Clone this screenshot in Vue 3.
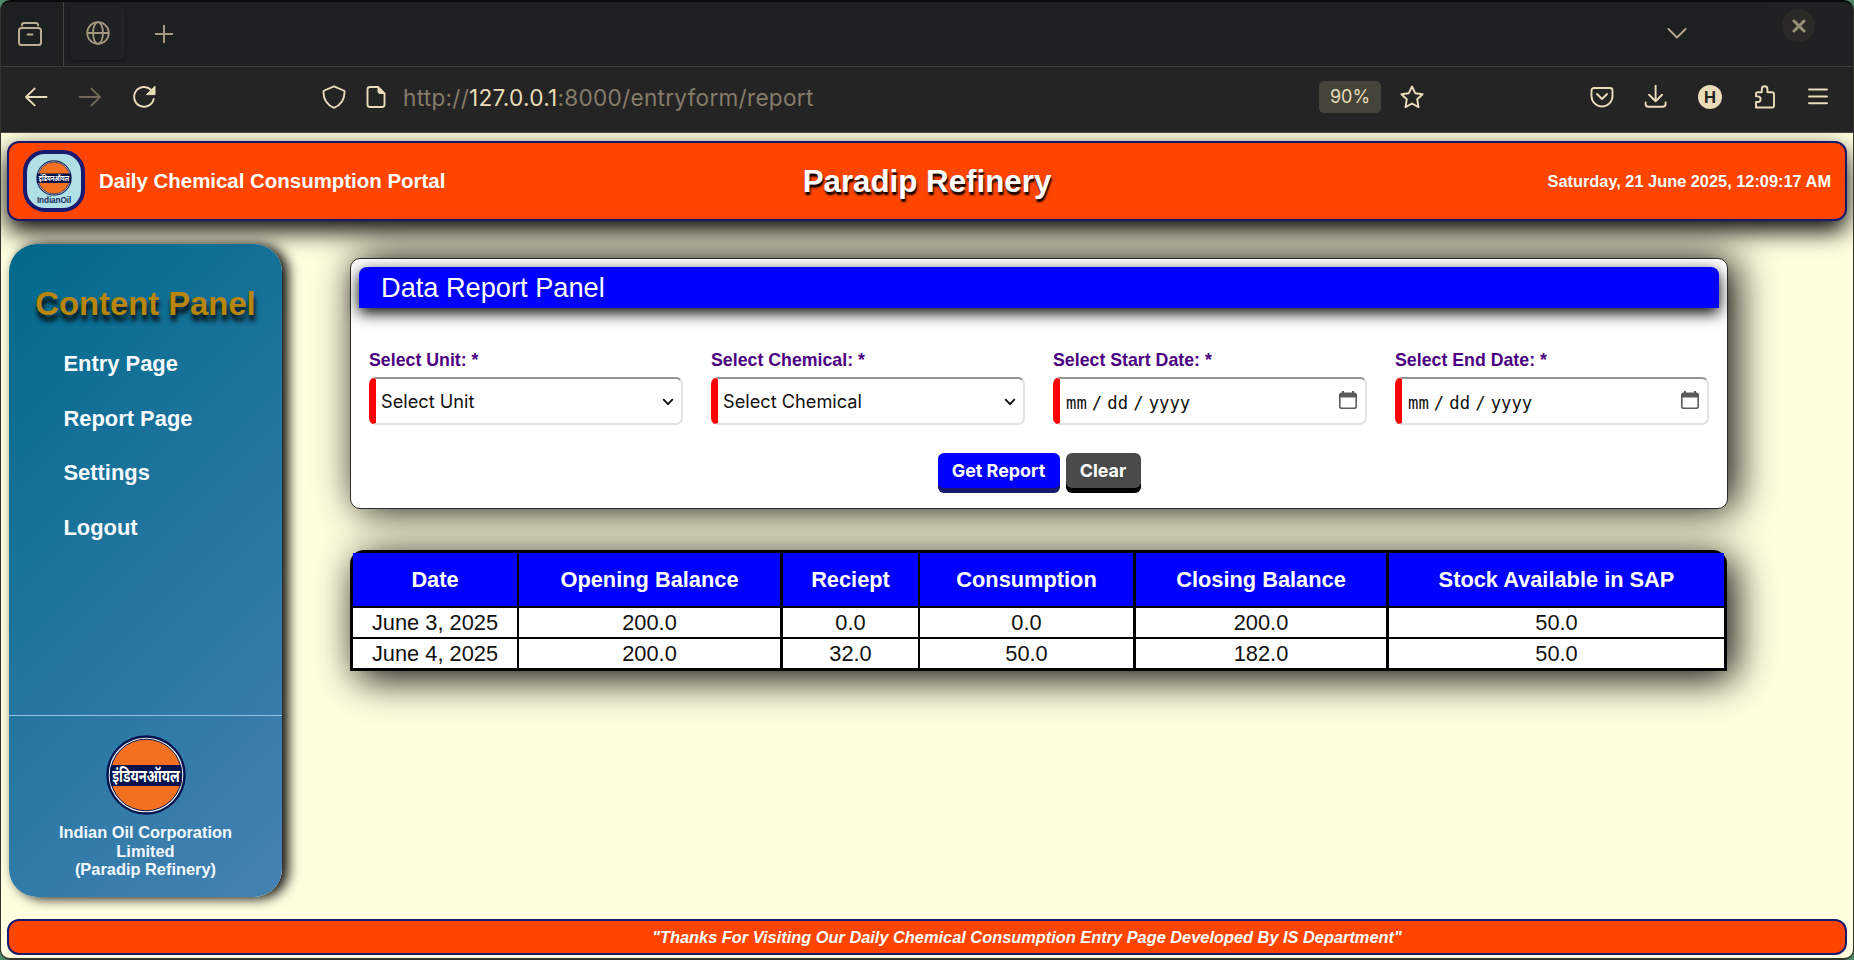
<script setup>
const menu = ['Entry Page', 'Report Page', 'Settings', 'Logout']

const fields = [
  { label: 'Select Unit: *', kind: 'select', text: 'Select Unit' },
  { label: 'Select Chemical: *', kind: 'select', text: 'Select Chemical' },
  { label: 'Select Start Date: *', kind: 'date' },
  { label: 'Select End Date: *', kind: 'date' },
]

const columns = ['Date', 'Opening Balance', 'Reciept', 'Consumption', 'Closing Balance', 'Stock Available in SAP']
const rows = [
  ['June 3, 2025', '200.0', '0.0', '0.0', '200.0', '50.0'],
  ['June 4, 2025', '200.0', '32.0', '50.0', '182.0', '50.0'],
]
</script>

<template>
  <div class="desktop">
    <div class="window">
      <div class="tabs">
        <div class="view">
          <svg width="26" height="26" viewBox="0 0 26 26" fill="none" stroke="#b9ae92" stroke-width="2" stroke-linecap="round">
            <path d="M5 4.4V4a2 2 0 0 1 2-2h12a2 2 0 0 1 2 2v.4" />
            <rect x="2" y="7" width="22" height="17" rx="2.6" />
            <path d="M10.6 13.6h4.8" />
          </svg>
        </div>
        <div class="tab">
          <svg width="24" height="24" viewBox="0 0 24 24" fill="none" stroke="#a2977f" stroke-width="1.8">
            <circle cx="12" cy="12" r="10.8" />
            <ellipse cx="12" cy="12" rx="5" ry="10.8" />
            <path d="M1.5 12h21" />
          </svg>
        </div>
        <svg class="plus" width="20" height="20" viewBox="0 0 20 20" stroke="#a2977f" stroke-width="2"><path d="M10 1v18M1 10h18" /></svg>
        <svg class="list" width="20" height="12" viewBox="0 0 20 12" fill="none" stroke="#b3a98d" stroke-width="1.8" stroke-linecap="round" stroke-linejoin="round"><path d="M1.4 1 10 9.500l8.600-8.500" /></svg>
        <div class="controls">
          <div class="close">
            <svg width="14" height="14" viewBox="0 0 14 14" stroke="#969079" stroke-width="3" stroke-linecap="round"><path d="m2 2 10 10M12 2 2 12" /></svg>
          </div>
        </div>
      </div>

      <div class="toolbar">
        <svg class="ic" viewBox="0 0 24 24"><path d="M22.500 12H2M10.600 3.600 2 12l8.600 8.400" /></svg>
        <svg class="ic g30 dim" viewBox="0 0 24 24"><path d="M1.500 12H22M13.400 3.600 22 12l-8.600 8.400" /></svg>
        <svg class="ic g30" viewBox="0 0 24 24"><path d="M21.700 14a9.900 9.900 0 1 1-2.700-9.200L21 7" /><path class="solid" d="M23 1.500V9.600h-8.200z" /></svg>
        <svg class="ic g166" viewBox="0 0 24 24"><path d="M12 1.300 21.600 5.500c.8.300 1 .8 1 1.500-.2 7-4 13.200-10.600 15.800C5.400 20.200 1.600 14 1.400 7c0-.7.200-1.200 1-1.500z" /></svg>
        <svg class="ic g18" viewBox="0 0 24 24"><path d="M14 2H6a2.500 2.500 0 0 0-2.500 2.500v15A2.500 2.500 0 0 0 6 22h12a2.500 2.500 0 0 0 2.500-2.500V8.400z" /><path class="solid" d="M14 2v4.500a2 2 0 0 0 2 2h4.500z" /></svg>
        <div class="url">http://<b>127.0.0.1</b>:8000/entryform/report</div>
        <div class="percent">90%</div>
        <svg class="ic g19" viewBox="0 0 24 24"><path d="m12 1.500 3.200 6.700 7.400 1-5.400 5.100 1.300 7.800-6.500-3.600-6.500 3.600 1.300-7.800L1.400 9.200l7.400-1z" /></svg>
        <svg class="ic g166" viewBox="0 0 24 24"><path d="M4 3h16a2.500 2.500 0 0 1 2.500 2.500V11a10.500 10.500 0 0 1-21 0V5.500A2.500 2.500 0 0 1 4 3z" /><path d="m7 9 5 5 5-5" /></svg>
        <svg class="ic g30" viewBox="0 0 24 24"><path d="M11.600.500V16M5.100 9.800l6.500 6.400 6.500-6.400M1.600 17.500V19a2.700 2.700 0 0 0 2.700 2.700h14.600a2.700 2.700 0 0 0 2.700-2.700v-1.500" /></svg>
        <div class="badge">H</div>
        <svg class="ic g31" viewBox="0 0 24 24"><path d="M3 22.500V17h1.800a2.800 2.800 0 0 0 0-5.600H3V9A1.800 1.800 0 0 1 4.800 7.200h4V4a2.800 2.800 0 0 1 5.600 0v3.200h4.800A1.800 1.800 0 0 1 21 9v11.700a1.800 1.800 0 0 1-1.800 1.800z" /></svg>
        <svg class="ic g29" viewBox="0 0 24 24"><path d="M3 4.500h18M3 11.500h18M3 18.200h18" /></svg>
      </div>

      <div class="page">
        <header class="header">
          <div class="brand">
            <div class="logo">
              <svg width="36" height="36" viewBox="0 0 80 80">
                <circle cx="40" cy="40" r="38" fill="#e8eef4" stroke="#1b2a5e" stroke-width="2.500" />
                <circle cx="40" cy="40" r="35.500" fill="#f37021" stroke="#1b2a5e" stroke-width="1.500" />
                <rect x="2" y="30" width="76" height="21" fill="#03134d" />
                <text transform="translate(40 46.500) scale(.78 1)" text-anchor="middle" class="hindi">इंडियनऑयल</text>
              </svg>
              <span>IndianOil</span>
            </div>
            <span class="portal">Daily Chemical Consumption Portal</span>
          </div>
          <h1>Paradip Refinery</h1>
          <time>Saturday, 21 June 2025, 12:09:17 AM</time>
        </header>

        <div class="body">
          <aside class="side">
            <h2>Content Panel</h2>
            <nav>
              <a v-for="m in menu" :key="m">{{ m }}</a>
            </nav>
            <div class="org">
              <svg width="80" height="80" viewBox="0 0 80 80">
                <circle cx="40" cy="40" r="38.500" fill="#f4f6fa" stroke="#03134d" stroke-width="2.400" />
                <circle cx="40" cy="40" r="35.800" fill="#f37021" stroke="#03134d" stroke-width="1" />
                <path d="M5 30h70q2 10.500 0 21H5q-2-10.500 0-21z" fill="#03134d" />
                <text transform="translate(40 46.500) scale(.78 1)" text-anchor="middle" class="hindi">इंडियनऑयल</text>
              </svg>
              <p>Indian Oil Corporation<br />Limited<br />(Paradip Refinery)</p>
            </div>
          </aside>

          <main class="main">
            <section class="panel">
              <div class="bar">Data Report Panel</div>
              <div class="fields">
                <div v-for="f in fields" :key="f.label" class="field">
                  <label>{{ f.label }}</label>
                  <div class="input">
                    <template v-if="f.kind === 'select'">
                      <span>{{ f.text }}</span>
                      <svg class="chev" width="12" height="8" viewBox="0 0 12 8" fill="none" stroke="#111" stroke-width="1.900"><path d="m1.200 1.200 4.800 5 4.800-5" /></svg>
                    </template>
                    <template v-else>
                      <span class="date"><i>mm</i><i class="sl">/</i><i>dd</i><i class="sl">/</i><i>yyyy</i></span>
                      <svg class="cal" width="18" height="18" viewBox="0 0 18 18"><path d="M4 0v3M14 0v3" stroke="#5b5b5b" stroke-width="2" /><path d="M0 6.500V4a2.500 2.500 0 0 1 2.500-2.500h13A2.500 2.500 0 0 1 18 4v2.500z" fill="#5b5b5b" /><rect x=".8" y="3" width="16.400" height="14.200" rx="2" fill="none" stroke="#5b5b5b" stroke-width="1.600" /></svg>
                    </template>
                  </div>
                </div>
              </div>
              <div class="actions">
                <button class="get">Get Report</button>
                <button class="clear">Clear</button>
              </div>
            </section>

            <table class="table">
              <thead>
                <tr><th v-for="c in columns" :key="c">{{ c }}</th></tr>
              </thead>
              <tbody>
                <tr v-for="r in rows" :key="r[0]"><td v-for="(v, i) in r" :key="i">{{ v }}</td></tr>
              </tbody>
            </table>
          </main>
        </div>

        <footer class="footer">"Thanks For Visiting Our Daily Chemical Consumption Entry Page Developed By IS Department"</footer>
      </div>
    </div>
  </div>
</template>

<style>
html, body { margin: 0; overflow: hidden; }
</style>

<style scoped>
* { box-sizing: border-box; }
.desktop { width: 1854px; height: 960px; background: #4e8a68; font-family: "Liberation Sans", Arial, sans-serif; }
.window { width: 1854px; height: 960px; border-radius: 10px; overflow: hidden; background: #0a0b0b; border: 1px solid #33342e; border-top: 2px solid #0a0b0b; border-bottom-width: 2px; display: flex; flex-direction: column; }

.tabs { height: 65px; flex: none; background: #1c2021; border-bottom: 1px solid #3b3b3a; display: flex; align-items: center; }
.view { width: 63px; height: 64px; border-right: 1px solid #45443f; padding: 19px 0 0 16px; }
.tab { width: 55px; height: 54px; margin-left: 6px; margin-top: -2px; background: #202123; border-radius: 6px; box-shadow: 0 1px 3px #131616; display: flex; align-items: center; justify-content: center; }
.plus { margin-left: 29px; }
.list { margin-left: auto; }
.controls { width: 86px; height: 64px; margin-left: 80px; background: #202123; padding: 7px 0 0 15px; }
.close { width: 33px; height: 33px; border-radius: 50%; background: #2b2a27; display: flex; align-items: center; justify-content: center; }

.toolbar { height: 66px; flex: none; background: #242424; border-bottom: 1px solid #4a4a43; padding: 0 23px; display: flex; align-items: center; padding-bottom: 5px; }
.ic { width: 24px; height: 24px; flex: none; fill: none; stroke: #eadcb8; stroke-width: 1.9; stroke-linecap: round; stroke-linejoin: round; }
.solid { fill: #eadcb8; stroke: #eadcb8; stroke-width: 1; }
.dim { stroke: #6f6859; }
.g18 { margin-left: 18px; }
.g19 { margin-left: 19px; }
.g29 { margin-left: 29px; }
.g30 { margin-left: 30px; }
.g31 { margin-left: 31px; }
.g166 { margin-left: 166px; }
.url { margin-left: 15px; padding-top: 1px; font: 22.6px/30px Inter, sans-serif; letter-spacing: .27px; color: #857c69; white-space: nowrap; }
.url b { font-weight: 400; color: #eadcb8; }
.percent { margin-left: auto; width: 62px; height: 32px; border-radius: 5px; background: #45443b; color: #eadcb8; font: 18px/32px Inter, sans-serif; text-align: center; }
.badge { margin-left: 30px; width: 24px; height: 24px; border-radius: 50%; background: #eadcb8; color: #242424; font: 700 16px/24px Inter, sans-serif; text-align: center; }

.page { flex: 1; background: #ffffe0; padding: 8px 6px 0; display: flex; flex-direction: column; overflow: hidden; }
.header { height: 80px; flex: none; border: 2px solid #191970; border-radius: 12px; background: #ff4500; box-shadow: 0 10px 24px #000; color: #fff; font-weight: 700; display: grid; grid-template-columns: 1fr auto 1fr; align-items: center; padding: 0 14px; }
.brand { display: flex; align-items: center; gap: 14px; }
.logo { width: 62px; height: 62px; border: 4px solid #191970; border-radius: 22px; background: #b0e0e6; display: flex; flex-direction: column; align-items: center; padding-top: 6px; }
.logo span { font-size: 8.2px; line-height: 9px; color: #1b2a5e; letter-spacing: -.1px; }
.portal { font-size: 20.45px; }
.header h1 { margin: 0; padding-top: 2px; font-size: 31.3px; text-shadow: 1px 3px 2px #000; }
.header time { font-size: 16.35px; text-align: right; }
.hindi { font: 700 16.8px "Noto Sans Devanagari", "Noto Sans", sans-serif; fill: #fff; }

.body { flex: none; display: flex; padding: 23px 0 0 2px; height: 698px; }
.side { width: 273px; height: 653px; border-radius: 28px; background: linear-gradient(135deg, #00698b, #4682b4); box-shadow: 6px 1px 13px #000; color: #fff; display: flex; flex-direction: column; }
.side h2 { margin: 41px 0 0; text-align: center; color: #b8860b; font-size: 32.8px; line-height: 38px; text-shadow: 1px 6px 5px #000; }
nav { padding: 14px 0 0 54.5px; }
nav a { display: block; color: #f8fbff; font-weight: 700; font-size: 21.9px; line-height: 54.7px; }
.org { margin-top: auto; height: 182px; border-top: 1px solid #9fc0da; padding-top: 19px; display: flex; flex-direction: column; align-items: center; }
.org p { margin: 8px 0 0; text-align: center; font-weight: 700; font-size: 16.4px; line-height: 18.7px; color: #f4f9ff; }

.main { margin-left: 68px; padding-top: 14px; width: 1378px; }
.panel { height: 251px; border: 1px solid #2a2d28; border-radius: 10px; background: #fff; box-shadow: 7px 0 42px #000; padding: 8px; }
.bar { height: 41px; border-radius: 8px 8px 0 0; background: #00f; color: #fff; font-size: 27.2px; line-height: 41px; padding-left: 22px; box-shadow: 0 5px 15px #000; }
.fields { display: grid; grid-template-columns: repeat(4, 314px); gap: 28px; padding: 41px 0 0 10px; }
label { display: block; font-weight: 700; font-size: 17.75px; line-height: 22px; color: #4b0082; margin-bottom: 6px; }
.input { height: 48px; border: 2px solid #e3e3e3; border-top-color: #949494; border-left: 7px solid #f00; border-radius: 7px; background: #fff; display: flex; align-items: center; justify-content: space-between; padding: 0 7px 1px 5px; font: 18.2px Inter, sans-serif; color: #111; }
.chev { margin-top: 2px; }
.date { font-family: "DejaVu Sans Mono", monospace; font-size: 17.3px; display: flex; padding: 4px 0 0 1px; }
.date i { font-style: normal; }
.date .sl { width: 20.500px; text-align: center; }
.cal { margin: -2px 1px 0 0; }
.actions { display: flex; justify-content: center; gap: 6px; margin-top: 28px; }
button { border: 0; height: 35px; border-radius: 6px; padding: 0; color: #fff; font: 700 17.9px/35px Inter, sans-serif; }
.get { width: 122px; background: #00f; box-shadow: 0 5px #191970; }
.clear { width: 75px; background: #4a4a4a; box-shadow: 0 5px #000; }

.table { display: block; margin-top: 41px; width: 1377px; border: 3px solid #000; border-radius: 14px 14px 0 0; background: #000; box-shadow: 7px 7px 40px #000; font-size: 21.8px; }
thead, tbody { display: block; }
tr { display: grid; grid-template-columns: 166px 264px 137px 216px 253px 335px; }
th, td { padding: 0; text-align: center; border-right: 3px solid #000; }
th:nth-child(1), td:nth-child(1), th:nth-child(3), td:nth-child(3) { border-right-width: 2px; }
th:last-child, td:last-child { border-right: 0; }
th { height: 53px; line-height: 53px; background: #00f; color: #fff; }
td { height: 29px; line-height: 30px; margin-top: 2px; background: #fff; color: #111; }

.footer { flex: none; height: 36px; border: 2px solid #191970; border-radius: 12px; background: #ff4500; color: #fff; font-style: italic; font-weight: 700; font-size: 16.36px; line-height: 32px; text-align: center; padding-left: 200px; }
</style>
